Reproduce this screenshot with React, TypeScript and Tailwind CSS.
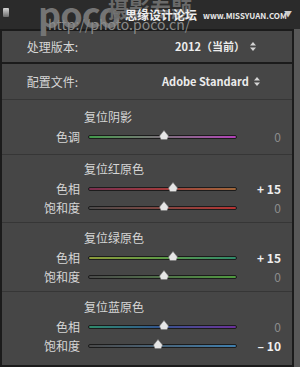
import React from 'react'

const font = { fontFamily: '"Noto Sans CJK SC", "Noto Sans", sans-serif' }

function UpDown() {
  return (
    <svg width="6" height="9" viewBox="0 0 6 9" className="ml-[5px]">
      <path d="M0 3.5 L3 0 L6 3.5 Z" fill="#d4d4d4" />
      <path d="M0 5.5 L3 9 L6 5.5 Z" fill="#d4d4d4" />
    </svg>
  )
}

interface SliderRowProps {
  label: string
  value: number
  track: string
}

function SliderRow({ label, value, track }: SliderRowProps) {
  // thumb centre in px across a 149px track (-100..100)
  const pos = 76 + (value / 100) * 58
  const text = value === 0 ? '0' : value > 0 ? `+ ${value}` : `– ${Math.abs(value)}`
  return (
    <div className="flex items-center h-[19px]">
      <div className="w-[78px] text-right text-[12px] text-[#d6d6d6] leading-none">{label}</div>
      <div className="relative ml-[8px] w-[149px] h-[4px]">
        <div className={`absolute inset-0 rounded-full border border-[#1c1c1c] ${track}`} />
        <svg
          width="10"
          height="10"
          viewBox="0 0 10 10"
          className="absolute top-[-5px]"
          style={{ left: pos - 5 }}
        >
          <path d="M5 0.5 L9.5 6 L8 9.5 L2 9.5 L0.5 6 Z" fill="#e6e6e6" stroke="#7a7a7a" strokeWidth="0.6" />
        </svg>
      </div>
      <div
        className={`w-[44px] text-right text-[12px] leading-none ${
          value === 0 ? 'text-[#8c8c8c]' : 'text-[#f0f0f0] font-bold'
        }`}
      >
        {text}
      </div>
    </div>
  )
}

interface SectionProps {
  title: string
  rows: SliderRowProps[]
  className?: string
}

function Section({ title, rows, className = '' }: SectionProps) {
  return (
    <div className={`border-t border-[#363636] ${className}`}>
      <div className="ml-[82px] h-[16px] flex items-center text-[12px] text-[#d6d6d6]">{title}</div>
      <div className="mt-[2px]">
        {rows.map((r) => (
          <SliderRow key={r.label} {...r} />
        ))}
      </div>
    </div>
  )
}

export default function App() {
  return (
    <div className="w-[300px] h-[367px] bg-[#2a2a2a] flex flex-col overflow-hidden" style={font}>
      {/* top strip with watermark */}
      <div className="relative h-[29px] bg-[#2b2b2b] shrink-0">
        <div className="absolute left-[3px] top-[8px] w-[6px] h-[9px] rounded-[1px] bg-gradient-to-b from-[#d8d8d8] to-[#6a6a6a]" />
        <div className="absolute left-[38px] top-[-6px] text-[36px] font-bold text-[#747474] leading-none tracking-[-1px]">
          poco
        </div>
        <div className="absolute left-[108px] top-[-2px] text-[21px] font-bold text-[#6a6a6a] leading-none">摄影专题</div>
        <div className="absolute left-[48px] top-[17px] text-[14px] text-[#8a8a8a] leading-none">
          http://photo.poco.cn/
        </div>
        <div className="absolute left-[125px] top-[9px] text-[12px] text-[#eeeeee] leading-none font-bold">
          思缘设计论坛
        </div>
        <div className="absolute left-[203px] top-[12px] text-[8px] text-[#e8e8e8] leading-none font-bold">
          www.MISSYUAN.COM
        </div>
        <div className="absolute left-[284px] top-[10px] text-[8px] text-[#cfcfcf] leading-none">▼</div>
      </div>

      <div className="flex flex-1 min-h-0">
        <div className="w-[294px] bg-[#464646] border-2 border-[#1b1b1b] flex flex-col text-[#d6d6d6]">
          <div className="h-[33px] flex items-center border-b-2 border-[#1b1b1b] shrink-0">
            <div className="w-[76px] text-right text-[12px]">处理版本:</div>
            <div className="ml-[97px] flex items-center text-[11px] font-bold text-[#ececec]">
              2012（当前）
              <UpDown />
            </div>
          </div>
          <div className="h-[35px] flex items-center shrink-0">
            <div className="w-[76px] text-right text-[12px]">配置文件:</div>
            <div className="ml-[84px] flex items-center text-[11px] font-bold text-[#ececec]">
              Adobe Standard
              <UpDown />
            </div>
          </div>
          <Section
            title="复位阴影"
            className="pt-[9px] pb-[8px]"
            rows={[{ label: '色调', value: 0, track: 'bg-gradient-to-r from-[#3f9a4a] via-[#7a6f7a] to-[#b23fb8]' }]}
          />
          <Section
            title="复位红原色"
            className="pt-[6px] pb-[5px]"
            rows={[
              { label: '色相', value: 15, track: 'bg-gradient-to-r from-[#7a2f4f] via-[#a23a3c] to-[#a0673a]' },
              { label: '饱和度', value: 0, track: 'bg-gradient-to-r from-[#4a4a4a] to-[#b53232]' },
            ]}
          />
          <Section
            title="复位绿原色"
            className="pt-[7px] pb-[5px]"
            rows={[
              { label: '色相', value: 15, track: 'bg-gradient-to-r from-[#8c9a3a] via-[#5e9a46] to-[#2f8a6a]' },
              { label: '饱和度', value: 0, track: 'bg-gradient-to-r from-[#4a4a4a] to-[#4f9a3f]' },
            ]}
          />
          <Section
            title="复位蓝原色"
            className="pt-[7px] pb-[4px]"
            rows={[
              { label: '色相', value: 0, track: 'bg-gradient-to-r from-[#2f8a6a] via-[#33528f] to-[#6a2f9a]' },
              { label: '饱和度', value: -10, track: 'bg-gradient-to-r from-[#4a4a4a] to-[#3f7fae]' },
            ]}
          />
        </div>
        <div className="flex-1 bg-[#585858]" />
      </div>
    </div>
  )
}
